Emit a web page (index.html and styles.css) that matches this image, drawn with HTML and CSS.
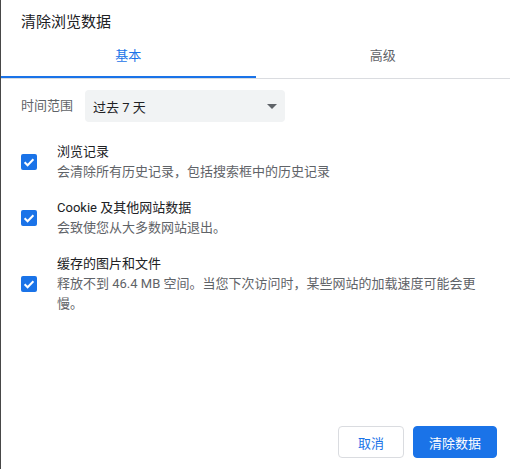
FILE: index.html
```html
<!DOCTYPE html>
<html lang="zh-CN">
<head>
<meta charset="utf-8">
<title>清除浏览数据</title>
<link rel="stylesheet" href="styles.css">
</head>
<body>
<div class="dialog">
  <div class="title">清除浏览数据</div>
  <div class="tabs">
    <div class="tab active">基本</div>
    <div class="tab">高级</div>
  </div>
  <div class="content">
    <div class="range">
      <span class="range-label">时间范围</span>
      <div class="select">
        <span>过去 7 天</span>
        <svg class="arrow" width="10" height="5" viewBox="0 0 10 5"><path d="M0 0h10L5 5z" fill="#5f6368"/></svg>
      </div>
    </div>
    <div class="items">
      <div class="item">
        <span class="check"><svg width="16" height="16" viewBox="0 0 16 16"><path d="M3.6 8.2l3 3 5.8-6" fill="none" stroke="#fff" stroke-width="2"/></svg></span>
        <div class="text">
          <div class="item-title">浏览记录</div>
          <div class="item-sub">会清除所有历史记录，包括搜索框中的历史记录</div>
        </div>
      </div>
      <div class="item">
        <span class="check"><svg width="16" height="16" viewBox="0 0 16 16"><path d="M3.6 8.2l3 3 5.8-6" fill="none" stroke="#fff" stroke-width="2"/></svg></span>
        <div class="text">
          <div class="item-title">Cookie 及其他网站数据</div>
          <div class="item-sub">会致使您从大多数网站退出。</div>
        </div>
      </div>
      <div class="item">
        <span class="check"><svg width="16" height="16" viewBox="0 0 16 16"><path d="M3.6 8.2l3 3 5.8-6" fill="none" stroke="#fff" stroke-width="2"/></svg></span>
        <div class="text">
          <div class="item-title">缓存的图片和文件</div>
          <div class="item-sub">释放不到 46.4 MB 空间。当您下次访问时，某些网站的加载速度可能会更慢。</div>
        </div>
      </div>
    </div>
  </div>
  <div class="buttons">
    <button class="btn cancel">取消</button>
    <button class="btn primary">清除数据</button>
  </div>
</div>
</body>
</html>
```
FILE: styles.css
```css
html, body {
  margin: 0;
  height: 100%;
}
body {
  background: #474747;
  font-family: Roboto, "Noto Sans CJK SC", sans-serif;
  font-size: 13px;
  color: #202124;
}
.dialog {
  margin-left: 1px;
  height: 100%;
  background: #fff;
  display: flex;
  flex-direction: column;
  box-sizing: border-box;
}
.title {
  padding: 12px 0 0 20px;
  font-size: 15px;
  line-height: 20px;
  color: #202124;
}
.tabs {
  display: flex;
  border-bottom: 1px solid #dadce0;
}
.tab {
  flex: 1;
  text-align: center;
  padding: 14px 0 10px;
  line-height: 20px;
  color: #5f6368;
  border-bottom: 2px solid transparent;
}
.tab.active {
  color: #1a73e8;
  border-bottom-color: #1a73e8;
}
.content {
  flex: 1;
  padding: 11px 28px 0 20px;
}
.range {
  display: flex;
  align-items: center;
  gap: 12px;
}
.range-label {
  color: #5f6368;
  line-height: 20px;
}
.select {
  width: 200px;
  height: 32px;
  box-sizing: border-box;
  background: #f1f3f4;
  border-radius: 4px;
  padding: 0 8px;
  display: flex;
  align-items: center;
  justify-content: space-between;
  color: #202124;
}
.items {
  padding-top: 20px;
  display: flex;
  flex-direction: column;
  gap: 16px;
}
.item {
  display: flex;
  align-items: center;
  gap: 20px;
}
.check {
  flex: none;
  width: 16px;
  height: 16px;
  border-radius: 2px;
  background: #1a73e8;
  display: flex;
}
.text {
  line-height: 20px;
}
.item-title {
  color: #202124;
}
.item-sub {
  color: #5f6368;
}
.buttons {
  display: flex;
  justify-content: flex-end;
  gap: 9px;
  padding: 0 13px 11px 0;
}
.btn {
  font-family: Roboto, "Noto Sans CJK SC", sans-serif;
  font-size: 13px;
  font-weight: 400;
  height: 32px;
  border-radius: 4px;
  cursor: pointer;
}
.cancel {
  background: #fff;
  color: #1a73e8;
  border: 1px solid #dadce0;
  padding: 0 19px;
}
.primary {
  background: #1a73e8;
  color: #fff;
  border: 1px solid #1a73e8;
  padding: 0 15px;
}
```
